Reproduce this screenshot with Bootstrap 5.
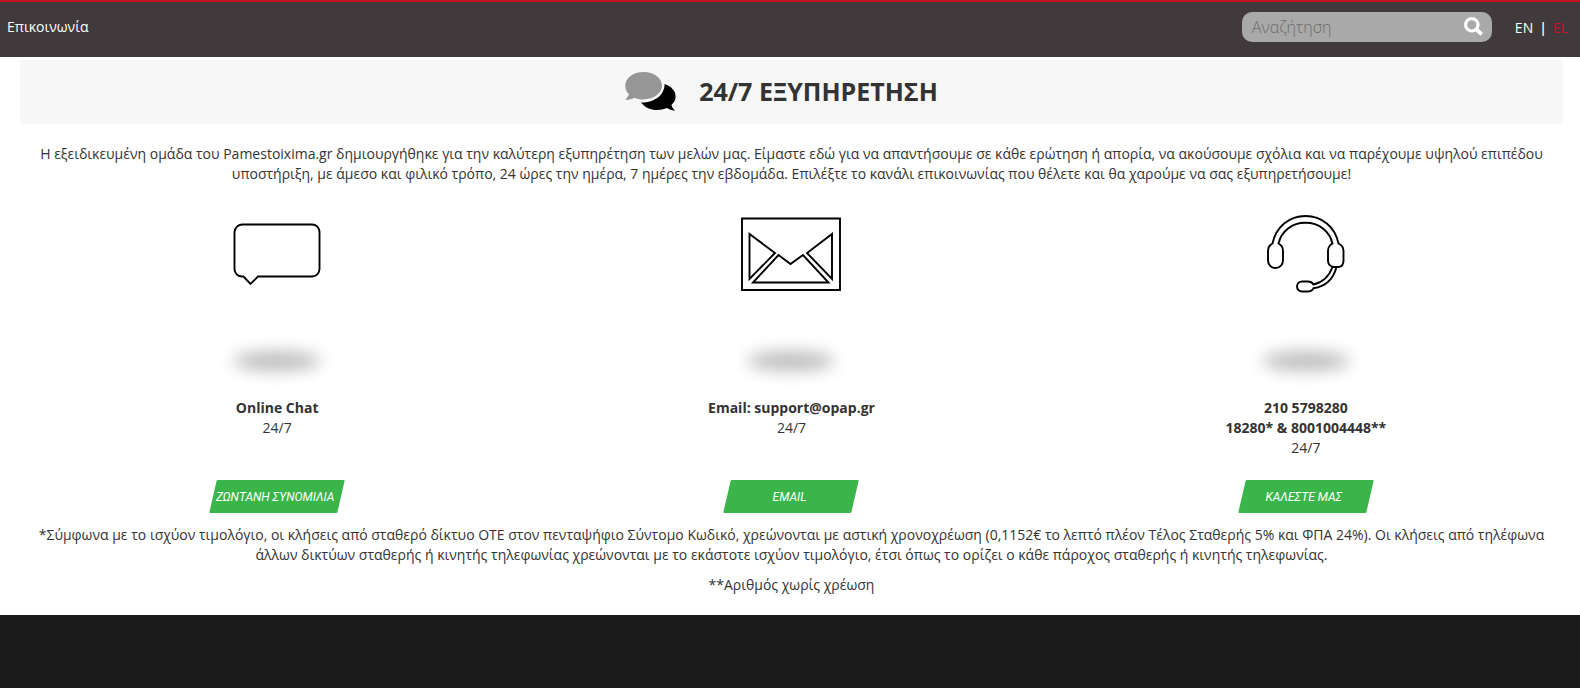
<!DOCTYPE html>
<html lang="el">
<head>
<meta charset="utf-8">
<meta name="viewport" content="width=device-width, initial-scale=1">
<title>Επικοινωνία</title>
<link href="https://cdn.jsdelivr.net/npm/bootstrap@5.3.0/dist/css/bootstrap.min.css" rel="stylesheet">
<style>
  body { font-family: "Open Sans", "Noto Sans", sans-serif; font-size: 14px; line-height: 20px; color: #333; background: #1b1b1b; }
  .topbar { background: #403a3c; border-top: 2px solid #c41425; height: 57px; padding: 10px 12px 0 7px; color: #fff; }
  .topbar .page-name { font-weight: 500; line-height: 30px; }
  .search-box { width: 250px; height: 30px; background: #a9a9a9; border-radius: 10px; margin-right: 23px; }
  .search-box input { font-size: 16px; font-weight: 300; line-height: 20px; padding: 5px 0 5px 10px; color: #333; min-width: 0; }
  .search-box input:focus { outline: 0; }
  .search-box input::placeholder { color: #6c6c6c; opacity: 1; }
  .search-box button { padding: 0 9px 2px 0; }
  .lang { line-height: 32px; gap: 6px; }
  .lang a { color: #fff; text-decoration: none; }
  .lang a.current { color: #c41425; }
  .page-main { background: #fff; padding: 3px 17px 20px 20px; }
  .title-band { background: #f7f7f7; height: 64px; gap: 23px; padding: 0 20px 2px 0; }
  .title-band h1 { font-size: 25px; line-height: 32px; font-weight: 700; }
  .copy { padding: 0 16px; margin: 0 0 10px; }
  .copy.intro { margin: 20px 0 16px; }
  .channel-text { height: 82px; }
  .drop-shade { width: 88px; height: 20px; border-radius: 50%; background: #bebebe; filter: blur(8px); margin: 31px auto 27px; }
  .btn-slant { position: relative; isolation: isolate; width: 128px; height: 33px; margin-bottom: 12px; color: #fff; font: italic 12px/35px Roboto, "Liberation Sans", sans-serif; white-space: nowrap; }
  .btn-slant span { display: block; padding-right: 4px; }
  .btn-slant::before { content: ""; position: absolute; inset: 0; z-index: -1; background: #3ab54a; border-radius: 1px; transform: skewX(-13deg); }
</style>
</head>
<body>
<header class="topbar d-flex align-items-start">
  <span class="page-name me-auto">Επικοινωνία</span>
  <form class="search-box d-flex align-items-center" role="search">
    <input class="flex-grow-1 border-0 bg-transparent" type="text" placeholder="Αναζήτηση" aria-label="Αναζήτηση">
    <button class="border-0 bg-transparent lh-1" type="button" aria-label="Αναζήτηση">
      <svg width="19" height="19" viewBox="0 0 19 19" fill="none" stroke="#fff"><circle cx="7.800" cy="7.800" r="6.200" stroke-width="3.200"/><path d="M12 12l5.800 5.400" stroke-width="3.800"/></svg>
    </button>
  </form>
  <nav class="lang d-flex" aria-label="Γλώσσα"><a href="#">EN</a><span class="fw-semibold">|</span><a href="#" class="current">EL</a></nav>
</header>

<main class="page-main text-center">
  <div class="title-band d-flex align-items-center justify-content-center">
    <svg width="51" height="40" viewBox="0 0 51 40">
      <path d="M39.6 13c7 2.500 11 7 11 12.500 0 3.500-1.500 6-4.200 8.500.6 2.200 2 3.700 3.600 5.500-3 .2-5.500-.7-8-2.400C33 40.700 22 39.500 16 31.500c13 .4 23.600-7 23.600-18.500z" fill="#000"/>
      <path d="M18.500 1C29 1 37 7 37 14.600S29 28.500 18.500 28.500c-3.500 0-6.500-.6-9.300-1.800C6.500 28.300 3.500 29 .3 28.700 2 27 3.400 25 4 23.300 1.600 21 .3 18 .3 14.700.3 7 8.200 1 18.500 1z" fill="#969696"/>
    </svg>
    <h1 class="mb-0">24/7 ΕΞΥΠΗΡΕΤΗΣΗ</h1>
  </div>

  <p class="copy intro">Η εξειδικευμένη ομάδα του Pamestoixima.gr δημιουργήθηκε για την καλύτερη εξυπηρέτηση των μελών μας. Είμαστε εδώ για να απαντήσουμε σε κάθε ερώτηση ή απορία, να ακούσουμε σχόλια και να παρέχουμε υψηλού επιπέδου υποστήριξη, με άμεσο και φιλικό τρόπο, 24 ώρες την ημέρα, 7 ημέρες την εβδομάδα. Επιλέξτε το κανάλι επικοινωνίας που θέλετε και θα χαρούμε να σας εξυπηρετήσουμε!</p>

  <div class="row g-0">
    <section class="col-4">
      <svg width="120" height="120" viewBox="0 0 120 120" fill="none" stroke="#000" stroke-width="1.900">
        <path d="M25.500 24.500H95a7.500 7.500 0 0 1 7.500 7.500v37a7.500 7.500 0 0 1-7.500 7.500H41l-7.500 7.500-7-7.500h-1a7.500 7.500 0 0 1-8-7.500V32a8 8 0 0 1 8-7.500z"/>
      </svg>
      <div class="drop-shade"></div>
      <div class="channel-text"><strong>Online Chat</strong><br>24/7</div>
      <button type="button" class="btn-slant border-0 bg-transparent p-0"><span>ΖΩΝΤΑΝΗ ΣΥΝΟΜΙΛΙΑ</span></button>
    </section>
    <section class="col-4">
      <svg width="120" height="120" viewBox="0 0 120 120" fill="none" stroke="#000" stroke-width="1.900">
        <path d="M11 18.500h98v71.500H11z"/>
        <path d="M18.500 34v45L44 53zM101 34v45L76 53z"/>
        <path d="M22 82.500h75.500L72 55 59.500 64 47.500 55z"/>
      </svg>
      <div class="drop-shade"></div>
      <div class="channel-text"><strong>Email: support@opap.gr</strong><br>24/7</div>
      <button type="button" class="btn-slant border-0 bg-transparent p-0"><span>EMAIL</span></button>
    </section>
    <section class="col-4">
      <svg width="120" height="120" viewBox="0 0 120 120" fill="none" stroke="#000" stroke-width="1.900">
        <path d="M26.500 43.500C30 27 43 16 59.500 16s29.500 11 33 27.500c3.300 1.500 5 4 5 7.500v9.500c0 3.500-2 6-4.500 6.500h-6c-3.500-1-5-3.500-5-6.500V51c0-3.500 1.600-6 4.500-7.500C83.500 31 73 22.800 59.500 22.800S35.500 31 32.500 43.500c3 1.500 4.500 4 4.500 7.500v9.500a7.500 7.500 0 0 1-15 0V51c0-3.500 1.500-6 4.500-7.500z"/>
        <path d="M86.500 67C83 76.500 76.500 82.500 67.500 84.500c-1.300-2.300-3-3-5.500-3h-6a5 5 0 0 0 0 10h6c3 0 4.500-1 5.500-3.300C79.500 86.500 87.500 78.500 90.500 67"/>
      </svg>
      <div class="drop-shade"></div>
      <div class="channel-text"><strong>210 5798280</strong><br><strong>18280* &amp; 8001004448**</strong><br>24/7</div>
      <button type="button" class="btn-slant border-0 bg-transparent p-0"><span>ΚΑΛΕΣΤΕ ΜΑΣ</span></button>
    </section>
  </div>

  <p class="copy">*Σύμφωνα με το ισχύον τιμολόγιο, οι κλήσεις από σταθερό δίκτυο ΟΤΕ στον πενταψήφιο Σύντομο Κωδικό, χρεώνονται με αστική χρονοχρέωση (0,1152€ το λεπτό πλέον Τέλος Σταθερής 5% και ΦΠΑ 24%). Οι κλήσεις από τηλέφωνα άλλων δικτύων σταθερής ή κινητής τηλεφωνίας χρεώνονται με το εκάστοτε ισχύον τιμολόγιο, έτσι όπως το ορίζει ο κάθε πάροχος σταθερής ή κινητής τηλεφωνίας.</p>
  <p class="copy mb-0">**Αριθμός χωρίς χρέωση</p>
</main>
<script src="https://cdn.jsdelivr.net/npm/bootstrap@5.3.0/dist/js/bootstrap.bundle.min.js"></script>
</body>
</html>
